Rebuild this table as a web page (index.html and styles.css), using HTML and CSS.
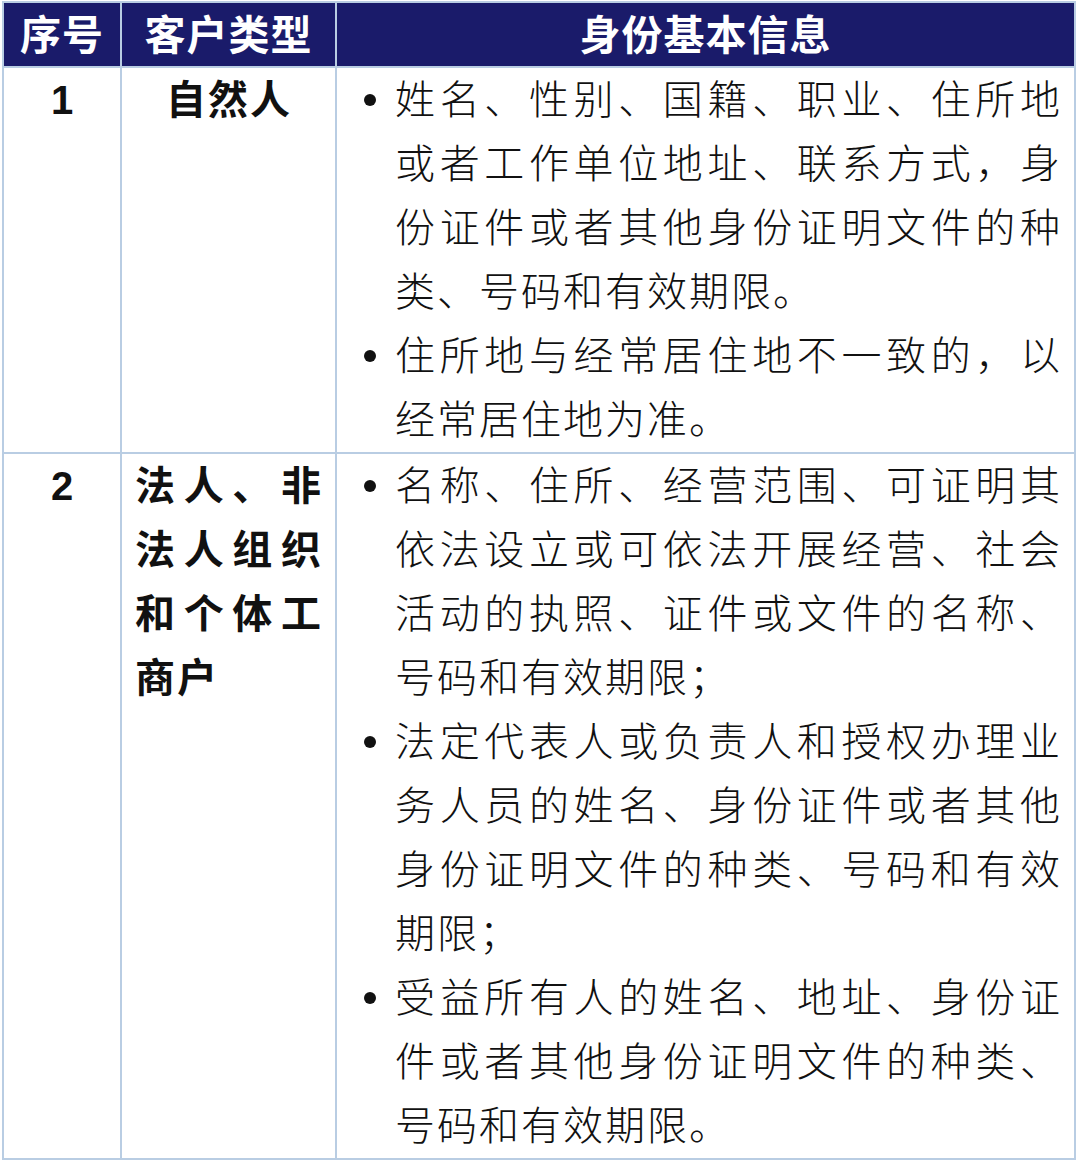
FILE: index.html
```html
<!DOCTYPE html>
<html lang="zh-CN">
<head>
<meta charset="utf-8">
<title>客户身份基本信息</title>
<link rel="stylesheet" href="styles.css">
</head>
<body>
<div class="table">
  <div class="th">序号</div>
  <div class="th">客户类型</div>
  <div class="th">身份基本信息</div>

  <div class="td num">1</div>
  <div class="td type center">自然人</div>
  <div class="td info">
    <ul class="list">
      <li><span class="txt">姓名、性别、国籍、职业、住所地或者工作单位地址、联系方式，身份证件或者其他身份证明文件的种类、号码和有效期限。</span></li>
      <li><span class="txt">住所地与经常居住地不一致的，以经常居住地为准。</span></li>
    </ul>
  </div>

  <div class="td num">2</div>
  <div class="td type">法人、非法人组织和个体工商户</div>
  <div class="td info">
    <ul class="list">
      <li><span class="txt">名称、住所、经营范围、可证明其依法设立或可依法开展经营、社会活动的执照、证件或文件的名称、号码和有效期限；</span></li>
      <li><span class="txt">法定代表人或负责人和授权办理业务人员的姓名、身份证件或者其他身份证明文件的种类、号码和有效期限；</span></li>
      <li><span class="txt">受益所有人的姓名、地址、身份证件或者其他身份证明文件的种类、号码和有效期限。</span></li>
    </ul>
  </div>
</div>
</body>
</html>
```
FILE: styles.css
```css
html, body {
  margin: 0;
  padding: 0;
  background: #ffffff;
}

body {
  font-family: "Liberation Sans", "Noto Sans CJK SC", sans-serif;
  color: #111111;
}

.table {
  display: grid;
  grid-template-columns: 116px 213px 737px;
  gap: 2px;
  padding: 2px;
  margin: 1px 0 0 2px;
  width: max-content;
  background: #b9cde3;
}

.th {
  height: 63px;
  box-sizing: border-box;
  padding-bottom: 5px;
  background: #1a1b6a;
  color: #ffffff;
  font-size: 41px;
  font-weight: 700;
  display: flex;
  align-items: center;
  justify-content: center;
  letter-spacing: 1px;
}

.td {
  background: #ffffff;
  font-size: 40px;
  line-height: 64px;
}

.num {
  text-align: center;
  font-weight: 700;
}

.type {
  font-weight: 700;
  padding: 0 12px 0 13px;
  text-align: justify;
  letter-spacing: 2px;
}

.type.center {
  text-align: center;
}

.list {
  list-style: none;
  margin: 0;
  padding: 0 12px 0 27px;
}

.list li {
  display: flex;
  align-items: flex-start;
}

.list li::before {
  content: "";
  flex: 0 0 12px;
  height: 12px;
  margin-top: 26px;
  margin-right: 19px;
  border-radius: 50%;
  background: #111111;
}

.txt {
  flex: 1 1 auto;
  min-width: 0;
  text-align: justify;
  letter-spacing: 2px;
  font-weight: 300;
}
```
